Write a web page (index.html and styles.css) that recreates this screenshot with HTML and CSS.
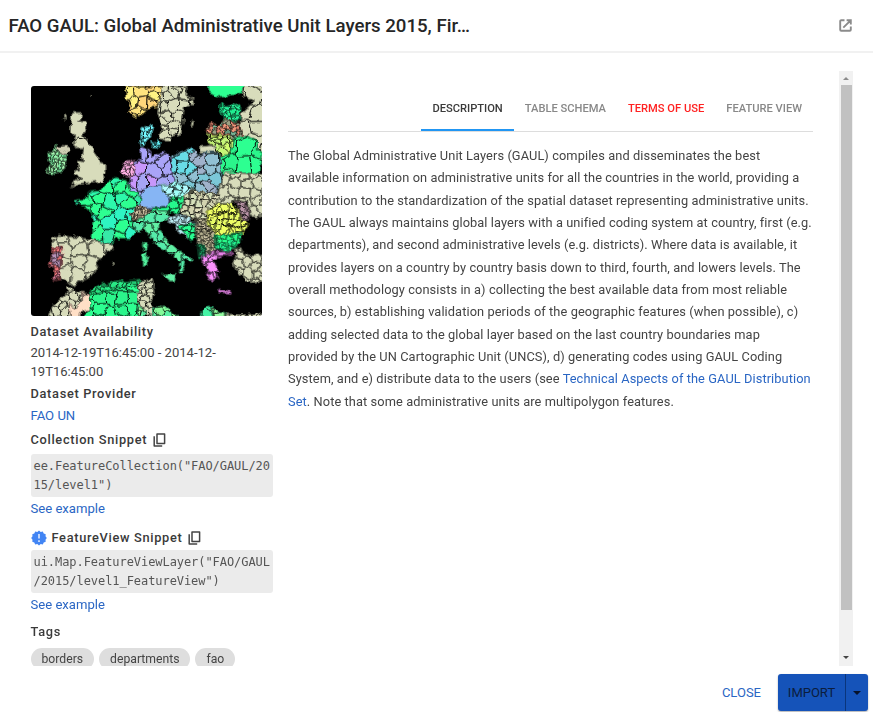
FILE: index.html
```html
<!DOCTYPE html>
<html lang="en">
<head>
<meta charset="utf-8">
<title>FAO GAUL</title>
<link rel="stylesheet" href="styles.css">
</head>
<body>
<div class="dialog">
  <header class="header">
    <h1 class="title">FAO GAUL: Global Administrative Unit Layers 2015, Fir…</h1>
    <svg class="open-icon" viewBox="0 0 13 13"><path d="M5.5 1.2H2.2a1 1 0 0 0-1 1v8.6a1 1 0 0 0 1 1h8.6a1 1 0 0 0 1-1V7.5M4.3 8.7l6.6-6.6M7.6 1.2h4.2v4.2" fill="none" stroke="#8b8b8b" stroke-width="1.9"/></svg>
  </header>
  <main class="body">
    <aside class="side">
      <svg class="map" id="map" viewBox="0 0 694 690" preserveAspectRatio="none"></svg>
      <h2 class="label first">Dataset Availability</h2>
      <p class="dates">2014-12-19T16:45:00 - 2014-12-<br>19T16:45:00</p>
      <h2 class="label">Dataset Provider</h2>
      <a class="link provider">FAO UN</a>
      <h2 class="label snippet">Collection Snippet <svg class="copy" viewBox="0 0 13 14"><path d="M4 1h7.6v9.4H4zM1.2 3.3v9.6h8" fill="none" stroke="#444" stroke-width="1.5" stroke-linejoin="round"/></svg></h2>
      <pre class="code">ee.FeatureCollection("FAO/GAUL/20
15/level1")</pre>
      <a class="link example">See example</a>
      <h2 class="label feature"><svg class="badge" viewBox="0 0 16 16"><path d="M8 .6l1.7 1.3 2.1-.4.9 1.9 2 .8-.2 2.1L15.8 8l-1.3 1.7.2 2.1-2 .8-.9 1.9-2.1-.4L8 15.4l-1.7-1.3-2.1.4-.9-1.9-2-.8.2-2.1L.2 8l1.3-1.7-.2-2.1 2-.8.9-1.9 2.1.4z" fill="#4285f4"/><path d="M8 4v4.6M8 10.2v1.7" stroke="#d7e4fc" stroke-width="1.7"/></svg>FeatureView Snippet <svg class="copy" viewBox="0 0 13 14"><path d="M4 1h7.6v9.4H4zM1.2 3.3v9.6h8" fill="none" stroke="#444" stroke-width="1.5" stroke-linejoin="round"/></svg></h2>
      <pre class="code">ui.Map.FeatureViewLayer("FAO/GAUL
/2015/level1_FeatureView")</pre>
      <a class="link example">See example</a>
      <h2 class="label tags-label">Tags</h2>
      <div class="tags"><span>borders</span><span>departments</span><span>fao</span></div>
    </aside>
    <section class="content">
      <nav class="tabs"><a class="tab active">DESCRIPTION</a><a class="tab">TABLE SCHEMA</a><a class="tab terms">TERMS OF USE</a><a class="tab">FEATURE VIEW</a></nav>
      <p class="desc">The Global Administrative Unit Layers (GAUL) compiles and disseminates the best<br>available information on administrative units for all the countries in the world, providing a<br>contribution to the standardization of the spatial dataset representing administrative units.<br>The GAUL always maintains global layers with a unified coding system at country, first (e.g.<br>departments), and second administrative levels (e.g. districts). Where data is available, it<br>provides layers on a country by country basis down to third, fourth, and lowers levels. The<br>overall methodology consists in a) collecting the best available data from most reliable<br>sources, b) establishing validation periods of the geographic features (when possible), c)<br>adding selected data to the global layer based on the last country boundaries map<br>provided by the UN Cartographic Unit (UNCS), d) generating codes using GAUL Coding<br>System, and e) distribute data to the users (see <a>Technical Aspects of the GAUL Distribution<br>Set</a>. Note that some administrative units are multipolygon features.</p>
    </section>
    <div class="scroll"><i class="up"></i><div class="thumb"></div><i class="down"></i></div>
  </main>
  <footer class="footer">
    <button class="close">CLOSE</button>
    <div class="split"><button class="import">IMPORT</button><button class="more"><i></i></button></div>
  </footer>
</div>
<script src="map.js"></script>
</body>
</html>
```
FILE: styles.css
```css
* { box-sizing: border-box; }
body { margin: 0; background: #fff; font-family: Roboto, sans-serif; color: #444; overflow: hidden; }
h1, h2, p, pre { margin: 0; }
button { font: inherit; border: 0; background: none; padding: 0; }
.dialog { width: 873px; height: 712px; display: flex; flex-direction: column; }
.header { height: 53px; flex: none; border-bottom: 2px solid #f1f1f1; display: flex; align-items: center; justify-content: space-between; padding: 0 21px 0 8.5px; }
.title { font-size: 18.65px; font-weight: 500; line-height: 24px; color: #262626; white-space: nowrap; }
.open-icon { width: 13px; height: 13px; }
.body { height: 595px; margin-top: 18px; flex: none; display: flex; overflow: hidden; padding-left: 30.5px; }
.side { width: 242.5px; flex: none; padding-top: 15px; }
.map { display: block; width: 231px; height: 230px; border-radius: 3px; background: #000; }
.label { font-size: 12.8px; font-weight: 500; letter-spacing: .68px; line-height: 20px; height: 20px; margin-top: 3px; display: flex; align-items: center; white-space: pre; color: #3a3a3a; }
.label.first { margin-top: 6px; }
.dates { font-size: 13.05px; line-height: 18.5px; margin-top: 2px; white-space: nowrap; }
.link { display: block; font-size: 13.1px; line-height: 20px; color: #2a66c4; margin-top: 2px; }
.link.example { margin-top: 2px; }
.label.snippet { margin-top: 4px; }
.label.feature { margin-top: 9px; }
.copy { width: 13px; height: 14px; margin-left: 2px; }
.badge { width: 16px; height: 16px; margin-right: 5px; }
.code { font-family: "DejaVu Sans Mono", monospace; font-size: 12px; letter-spacing: -.06px; line-height: 18.6px; height: 43px; background: #ebebeb; border-radius: 3px; padding: 3px; margin-top: 4px; color: #555; }
.feature + .code { margin-top: 2px; }
.label.tags-label { margin-top: 7px; }
.tags { display: flex; gap: 5px; margin-top: 6px; }
.tags span { height: 22px; border-radius: 11px; background: #dedede; font-size: 12.2px; line-height: 22px; padding: 0 11px; white-space: nowrap; }
.content { width: 525px; margin-left: 15px; flex: none; }
.tabs { display: flex; justify-content: flex-end; height: 61px; border-bottom: 1px solid #ddd; }
.tab { padding: 28px 11px 0; font-size: 11.15px; line-height: 20px; font-weight: 500; color: #888; white-space: nowrap; }
.tab.active { color: #3a3a3a; border-bottom: 2px solid #2196f3; height: 60px; }
.tab.terms { color: #f22; }
.desc { font-size: 12.8px; line-height: 22.35px; letter-spacing: .09px; margin-top: 13px; white-space: nowrap; }
.desc a { color: #2a66c4; }
.scroll { width: 14px; margin-left: 26px; background: #f1f1f1; display: flex; flex-direction: column; align-items: center; flex: none; }
.scroll i { border: 3.5px solid transparent; width: 0; height: 0; flex: none; }
.up { border-bottom-color: #8b8b8b !important; border-top: 0 !important; margin: 6px 0 5px; }
.thumb { width: 11px; height: 525px; background: #c1c1c1; }
.down { border-top-color: #444 !important; border-bottom: 0 !important; margin-top: 46px; }
.footer { flex: 1; display: flex; justify-content: flex-end; padding: 8px 5px 1px 0; }
.close { font-size: 13px; color: #2a66c4; margin-right: 17px; }
.split { display: flex; width: 90px; height: 37px; background: #1553b9; border-radius: 3px; box-shadow: 0 1px 2px #0005; }
.import { width: 68px; font-size: 13px; border-right: 1px solid #0a357c; color: #0b1d3d; }
.more { flex: 1; display: flex; align-items: center; justify-content: center; }
.more i { border: 4.5px solid transparent; border-top-color: #06122a; border-bottom: 0; }
```
FILE: map.js
```js
// Each region: x offset, y offset, cell size, fill colours, outline points.
const T = ['#d8dcbb'], G = ['#2dff91', '#2bf58b'];
const regions = [
  [-30,-30,60,T,'150,125 160,110 183,110 180,125 170,137 200,138 195,160 185,178 200,190 215,220 232,245 235,262 255,265 255,290 245,300 248,315 215,318 190,322 165,328 150,335 165,312 185,305 160,295 162,285 175,280 168,255 188,258 185,235 190,215 160,215 158,195 165,180 148,170',1],
  [-30,-30,11,['#96f7ac','#a5f5b0','#7deba0'],'78,232 95,228 105,205 118,228 132,235 135,270 120,285 90,298 75,290 90,265 80,250'],
  [-30,-30,40,['#d0cfb4'],'110,215 125,205 140,208 144,225 132,235 118,228'],
  [-30,-30,50,T,'128,118 133,118 132,128 127,126'],
  [-30,-30,50,T,'209,57 212,57 212,60 209,60'],
  [0,0,27,['#ffe47f','#fff383','#ffd67b'],'284,5 290,0 396,0 390,40 376,65 350,70 332,88 310,94 290,75 298,50 284,30'],
  [330,-30,29,T,'65,30 135,30 135,55 160,70 155,85 130,95 125,150 120,175 95,180 90,198 70,198 60,180 65,150 50,110 55,80'],
  [330,-30,50,T,'155,132 160,135 155,152 151,148'],
  [0,0,17,['#74f8ff'],'330,125 345,122 362,112 366,130 358,155 345,165 335,185 330,170'],
  [330,-30,12,['#62edf2'],'30,195 45,205 52,188 60,200 50,218 32,208'],
  [330,-30,50,G,'203,20 315,20 305,50 270,58 235,62 205,48'],
  [0,0,49,T,'645,-10 710,-10 710,270 670,200 680,165 640,160 632,130 635,80 672,45 635,30'],
  [330,-30,14,['#28f59c','#20ee91'],'236,90 300,83 300,130 265,135 248,130'],
  [330,-30,13,['#ef967b','#77b294','#9ba184','#e28670'],'200,150 218,138 232,152 250,130 300,140 305,180 270,188 230,175 200,175'],
  [330,-30,19,['#d1fb70','#c5f578'],'198,175 270,178 278,200 265,235 240,238 220,210 198,195'],
  [330,-30,50,T,'180,212 220,208 222,228 180,228'],
  [330,-30,42,G,'235,240 270,235 280,185 310,180 350,195 350,225 362,230 355,295 320,302 240,295'],
  [330,-30,31,['#7bc8d8','#a0b2cb','#68dce6','#91c0d3'],'92,240 145,215 165,222 170,240 190,230 232,228 240,260 240,325 225,355 185,350 155,340 95,318'],
  [0,0,36,['#aaa4f8','#c897fb','#a6a5f5','#aaa4f8'],'330,185 360,195 362,215 400,195 420,215 425,270 430,290 400,300 405,335 370,370 318,360 320,325 297,312 298,278 310,248 312,225 332,222'],
  [0,0,60,['#86b5f4'],'340,310 365,300 395,300 415,340 410,358 380,365 330,364 325,350'],
  [-30,-30,14,['#ffb1e5','#f3a6d8'],'300,280 320,255 340,250 342,275 330,305 305,300 295,290'],
  [330,-30,21,['#9ffcf7','#b2fcff'],'65,330 100,318 150,330 158,350 130,370 90,368 70,350'],
  [0,0,35,['#2eff91','#36e9a7','#2ef5c2','#2dff91','#2df7ab'],'128,343 175,338 175,318 210,315 230,290 255,275 290,285 300,315 325,320 330,345 318,362 302,390 305,420 315,440 300,458 255,455 245,475 210,470 182,460 190,405 175,365 135,352'],
  [-30,330,10,['#dacbaa','#b8aa8f'],'328,55 345,30 375,35 390,45 380,65 340,70'],
  [330,330,24,['#25fa8c'],'75,25 100,5 130,5 128,40 110,55 80,45 30,48 30,38 75,35'],
  [0,0,28,['#60f1a4','#55ebaa'],'308,410 330,396 370,375 410,375 412,400 385,408 385,435 405,460 440,490 485,522 480,528 455,515 462,545 450,565 443,555 448,530 430,510 390,490 365,465 355,440 335,430 315,440'],
  [330,330,60,['#62f3a6'],'65,235 105,232 102,255 88,255'],
  [330,330,50,['#54f4a0'],'3,175 18,172 18,210 5,210'],
  [330,330,50,['#54f4a0'],'5,145 18,140 15,165 7,162'],
  [330,330,15,['#b4e2ed','#b8e7ee'],'80,60 120,55 160,75 165,90 120,85 125,105 150,130 115,112 100,85 82,78'],
  [330,330,20,['#28fc91'],'115,90 160,80 168,125 150,135'],
  [330,330,19,['#dfdebb','#d5dfb9','#d2d3af'],'132,0 150,-15 210,-10 240,-5 230,22 200,45 195,68 140,65 120,45'],
  [330,330,11,['#b6b190','#c7bfa0'],'165,70 195,65 225,110 225,165 200,180 170,140'],
  [330,330,19,['#efff64','#e8fb67'],'200,45 225,22 275,22 300,50 315,80 325,85 305,115 225,118 200,85'],
  [330,330,13,['#b994a6'],'285,15 310,18 328,50 325,75 305,75 300,45'],
  [330,330,30,T,'235,-25 250,-70 360,-65 385,-65 385,48 345,70 326,45 320,18 285,12 275,22 230,22'],
  [330,330,15,['#22f190','#29fa89'],'225,118 305,110 300,140 280,155 270,168 225,160'],
  [330,330,10,['#1fa768','#209d65'],'170,145 190,145 195,180 175,190'],
  [330,330,28,['#fb91fd'],'185,180 220,168 275,168 278,178 240,178 238,185 215,190 235,225 222,225 230,240 222,255 205,250 200,235 210,230 190,210'],
  [330,330,60,['#fb91fd'],'235,282 272,286 270,292 237,288'],
  [330,330,25,T,'280,160 300,155 305,170 325,182 385,172 385,255 330,262 295,230 275,200 290,180'],
  [-30,330,44,T,'92,130 110,118 210,130 270,145 278,155 250,172 225,200 230,215 205,245 155,270 130,250 100,240 95,155'],
  [-30,330,13,['#f2777d','#b590b5','#d77d95'],'95,153 128,155 122,180 118,248 97,250 100,225 88,210'],
  [-30,330,50,T,'273,200 279,199 281,206 275,207'],
  [-30,330,25,T,'78,380 82,362 95,330 135,295 145,275 155,285 190,290 190,330 155,380'],
  [-30,330,80,['#ffdfc6'],'145,325 165,335 185,320 185,290 203,293 210,340 175,350 172,380 150,380'],
  [0,0,33,G,'175,625 200,605 250,590 330,580 335,610 322,630 345,710 143,710 178,670'],
  [0,0,15,['#29e985'],'175,620 200,600 250,588 330,582 330,600 250,610 180,626'],
  [330,330,20,T,'-5,255 35,250 40,290 30,320 45,335 30,360 8,350 -10,310'],
  [330,330,30,['#5bf2a4','#83fa99'],'-10,330 10,345 12,380 -10,380'],
  [330,330,26,['#5bf2a4','#83fa99'],'40,335 75,330 110,362 110,380 30,380'],
  [330,330,27,['#45f4a5','#92fba0'],'180,350 205,330 230,345 255,350 260,380 180,380'],
  [330,330,27,T,'258,354 300,357 385,350 385,380 258,380']
];

let seed = 7;
const rand = () => (seed = (seed * 16807) % 2147483647) / 2147483647;

// Keeps the part of a polygon nearer to seed a than to seed b.
function cut(poly, a, b) {
  const mx = (a[0] + b[0]) / 2, my = (a[1] + b[1]) / 2, nx = b[0] - a[0], ny = b[1] - a[1];
  const side = p => (p[0] - mx) * nx + (p[1] - my) * ny;
  const out = [];
  poly.forEach((p, i) => {
    const q = poly[(i + 1) % poly.length], s = side(p), t = side(q);
    if (s <= 0) out.push(p);
    if (s * t < 0) { const k = s / (s - t); out.push([p[0] + (q[0] - p[0]) * k, p[1] + (q[1] - p[1]) * k]); }
  });
  return out;
}

let defs = '<filter id="rough" filterUnits="userSpaceOnUse" color-interpolation-filters="sRGB" x="-30" y="-30" width="754" height="750"><feTurbulence type="fractalNoise" baseFrequency=".05" numOctaves="2" seed="4"/><feDisplacementMap in="SourceGraphic" scale="20" xChannelSelector="R" yChannelSelector="G"/></filter>';
let art = '';
regions.forEach(([dx, dy, size, colors, text, plain], n) => {
  const pts = text.split(' ').map(s => s.split(',').map(Number)).map(([x, y]) => [x + dx, y + dy]);
  const path = pts.map(p => p.join()).join(' ');
  const xs = pts.map(p => p[0]), ys = pts.map(p => p[1]);
  const x0 = Math.min(...xs), x1 = Math.max(...xs), y0 = Math.min(...ys), y1 = Math.max(...ys);
  defs += `<clipPath id="c${n}"><polygon points="${path}"/></clipPath>`;
  art += `<polygon points="${path}" fill="${colors[0]}" stroke="${colors[0]}" stroke-width="3"/>`;
  if (!plain && size < 50) {
    const seeds = [];
    for (let y = y0 - size / 2; y < y1 + size; y += size)
      for (let x = x0 - size / 2; x < x1 + size; x += size)
        seeds.push([x + rand() * size * .8, y + rand() * size * .8]);
    art += `<g clip-path="url(#c${n})">`;
    seeds.forEach(a => {
      let cell = [[x0 - size, y0 - size], [x1 + size, y0 - size], [x1 + size, y1 + size], [x0 - size, y1 + size]];
      seeds.forEach(b => { if (b !== a && Math.hypot(a[0] - b[0], a[1] - b[1]) < size * 4) cell = cut(cell, a, b); });
      art += `<polygon points="${cell.map(p => p.map(v => v.toFixed(1)).join()).join(' ')}" fill="${colors[Math.floor(rand() * colors.length)]}" stroke="#000" stroke-width="${size < 16 ? 1.9 : 2.5}"/>`;
    });
    art += '</g>';
  }
  art += `<polygon points="${path}" fill="none" stroke="#000" stroke-width="1.6"/>`;
});
art += '<path d="M128 165l15-12 22 5 10 15" fill="none" stroke="#000" stroke-width="3"/>';
document.getElementById('map').innerHTML = `<defs>${defs}</defs><g filter="url(#rough)">${art}</g>`;
```
